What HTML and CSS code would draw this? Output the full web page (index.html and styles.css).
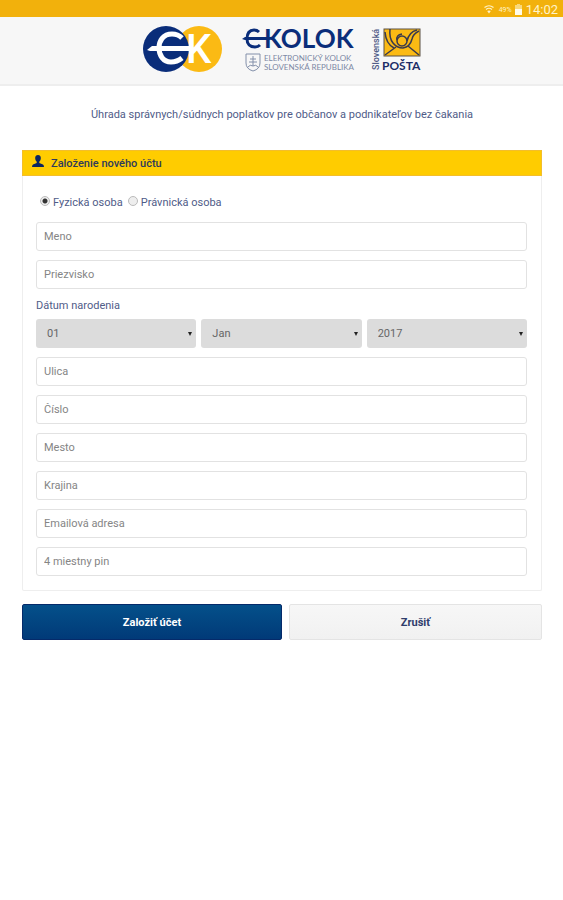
FILE: index.html
```html
<!DOCTYPE html>
<html lang="sk">
<head>
    <meta charset="UTF-8">
    <meta name="viewport" content="width=device-width, initial-scale=1">
    <title>E-KOLOK</title>
    <link rel="stylesheet" href="styles.css">
</head>
<body>
    <div class="status-bar">
        <svg class="status-wifi" width="10" height="9" viewBox="0 0 10 9" fill="none" stroke="#fff3c8">
            <path d="M0.5 2.5Q5 -1 9.5 2.5M2 4.5Q5 2 8 4.5" stroke-width="1.2"/>
            <path d="M3.2 6L5 8.6L6.8 6Q5 4.8 3.2 6Z" fill="#fff3c8" stroke="none"/>
        </svg>
        <span class="status-percent">49%</span>
        <svg class="status-battery" width="7" height="11" viewBox="0 0 7 11">
            <path d="M2 0H5V1H7V5H0V1H2Z" fill="#f9d97c"/>
            <path d="M0 5H7V11H0Z" fill="#fffbe9"/>
        </svg>
        <span class="status-time">14:02</span>
    </div>

    <header class="header">
        <svg class="logo" width="80" height="48" viewBox="0 0 80 48">
            <circle cx="57" cy="24" r="23" fill="#fbba14"/>
            <circle cx="24" cy="24" r="23" fill="#0a2d7a"/>
            <path d="M5 25L10 21H51V26H8Z" fill="#fff"/>
            <path d="M40 13Q36 9 30 9C21 9 17 16 17 23S21 37 29 37Q35 37 40 33" fill="none" stroke="#fff" stroke-width="5"/>
            <text class="logo-k" x="44" y="38">K</text>
        </svg>
        <svg class="logo" width="116" height="52" viewBox="-2 -4 116 52">
            <path d="M18 7Q16 5 13 5C8 5 6 9 6 14S9 22 14 22Q17 22 19 20" fill="none" stroke="#0a2d7a" stroke-width="3"/>
            <path d="M1 14L4 12H26V15H4Z" fill="#0a2d7a"/>
            <text class="logo-title" x="23" y="23">KOLOK</text>
            <g fill="none" stroke="#8390aa">
                <path d="M5 29H19V38Q19 44 12 46Q5 44 5 38Z"/>
                <path d="M12 31V41M9 34H15M8 37H16M7 42Q9 39 12 41Q15 39 17 42"/>
            </g>
            <text class="logo-sub" x="23" y="36">ELEKTRONICKÝ KOLOK</text>
            <text class="logo-sub" x="23" y="45">SLOVENSKÁ REPUBLIKA</text>
        </svg>
        <svg class="logo" width="50" height="48" viewBox="0 0 50 48">
            <text class="logo-side" transform="translate(7 45) rotate(-90)">Slovenská</text>
            <rect x="12" y="4" width="36" height="27" fill="#fbba14" stroke="#5b5145" stroke-width="1"/>
            <g fill="none" stroke="#3a3a4c" stroke-width="1.5">
                <circle cx="30" cy="16" r="5"/>
                <path d="M18 4Q17 13 21 18T31 23Q38 22 40 14Q41 9 47 6"/>
                <path d="M13 7Q14 19 22 23M35 16Q37 7 45 5M25 15Q24 10 30 9"/>
                <path d="M13 30L24 22M47 30L36 21"/>
            </g>
            <text class="logo-post" x="10" y="45">POŠTA</text>
        </svg>
    </header>

    <main class="content">
        <p class="intro">Úhrada správnych/súdnych poplatkov pre občanov a podnikateľov bez čakania</p>

        <form>
            <section class="panel">
                <h1 class="panel-heading">
                    <svg class="panel-icon" width="12" height="12" viewBox="0 0 12 12" fill="#0b2560">
                        <path d="M6 0C8 0 9 1.4 8.8 3.5C8.7 5 8 6 7.3 6.7V8L11 9.4Q12 10 12 12H0Q0 10 1 9.4L4.7 8V6.7C4 6 3.3 5 3.2 3.5C3 1.4 4 0 6 0Z"/>
                    </svg>
                    Založenie nového účtu
                </h1>
                <div class="panel-body">
                    <div class="radios">
                        <input type="radio" id="person" name="type" checked>
                        <label for="person">Fyzická osoba</label>
                        <input type="radio" id="company" name="type">
                        <label for="company">Právnická osoba</label>
                    </div>
                    <input class="field" type="text" placeholder="Meno" aria-label="Meno">
                    <input class="field" type="text" placeholder="Priezvisko" aria-label="Priezvisko">
                    <label class="date-label" for="day">Dátum narodenia</label>
                    <div class="date">
                        <div class="select">
                            <select id="day"><option>01</option></select>
                        </div>
                        <div class="select">
                            <select id="month" aria-label="Mesiac"><option>Jan</option></select>
                        </div>
                        <div class="select">
                            <select id="year" aria-label="Rok"><option>2017</option></select>
                        </div>
                    </div>
                    <input class="field" type="text" placeholder="Ulica" aria-label="Ulica">
                    <input class="field" type="text" placeholder="Číslo" aria-label="Číslo">
                    <input class="field" type="text" placeholder="Mesto" aria-label="Mesto">
                    <input class="field" type="text" placeholder="Krajina" aria-label="Krajina">
                    <input class="field" type="email" placeholder="Emailová adresa" aria-label="Emailová adresa">
                    <input class="field" type="text" placeholder="4 miestny pin" aria-label="4 miestny pin">
                </div>
            </section>

            <div class="buttons">
                <button class="btn btn-primary" type="submit">Založiť účet</button>
                <button class="btn btn-default" type="button">Zrušiť</button>
            </div>
        </form>
    </main>
</body>
</html>
```
FILE: styles.css
```css
* {
    box-sizing: border-box;
}
body {
    margin: 0;
    background: #fff;
    color: #505c88;
    font-family: Roboto, "Noto Sans", sans-serif;
    font-size: 11px;
}
.status-bar {
    display: flex;
    align-items: center;
    justify-content: flex-end;
    gap: 3px;
    height: 17px;
    padding: 2px 5px 0 0;
    background: #f2b10c;
    color: #fff3c8;
}
.status-percent {
    margin-left: 2px;
    font-size: 7px;
}
.status-time {
    margin-left: 1px;
    font-size: 13px;
}
.header {
    display: flex;
    align-items: flex-end;
    justify-content: center;
    gap: 17px;
    padding: 4px 0 11px;
    background: #f7f7f7;
    border-bottom: 2px solid #eee;
}
.logo {
    display: block;
    overflow: visible;
}
.logo-k {
    fill: #fff;
    font: 500 40px Roboto, sans-serif;
}
.logo-title {
    fill: #0a2d7a;
    font: bold 26px/1 Lato, sans-serif;
}
.logo-sub {
    fill: #7d89a5;
    font: 8px Lato, sans-serif;
}
.logo-side {
    fill: #4d5985;
    font: 500 9px Roboto, sans-serif;
}
.logo-post {
    fill: #1c2d66;
    font: bold 12px Lato, sans-serif;
}
.content {
    padding: 0 21px 0 22px;
}
.intro {
    margin: 0;
    padding: 21px 0 27px;
    line-height: 16px;
    text-align: center;
}
.panel {
    border: 1px solid #eee;
    border-top: 0;
    border-radius: 2px;
}
.panel-heading {
    display: flex;
    align-items: center;
    gap: 7px;
    height: 26px;
    margin: 0 -1px;
    padding: 0 9px;
    background: #fc0;
    border: 1px solid #f3be2c;
    color: #2e3a5c;
    font-size: 11px;
    font-weight: 500;
}
.panel-icon {
    margin-bottom: 4px;
}
.panel-body {
    display: flex;
    flex-direction: column;
    gap: 9px;
    padding: 16px 14px 14px 13px;
}
.radios {
    display: flex;
    align-items: center;
    height: 20px;
    margin-bottom: 1px;
    padding-left: 4px;
}
.radios input {
    appearance: none;
    width: 10px;
    height: 10px;
    margin: 0 3px 3px 0;
    border: 1px solid #bbb;
    border-radius: 50%;
    background: #eee;
}
.radios input:checked {
    background: radial-gradient(circle, #333 2px, #eee 3px);
}
.radios label {
    margin-right: 5px;
}
.field {
    width: 100%;
    height: 29px;
    padding: 0 7px;
    border: 1px solid #e2e2e2;
    border-radius: 3px;
    background: #fff;
    color: #555;
    font: inherit;
}
.field::placeholder {
    color: #858585;
    opacity: 1;
}
.date-label {
    margin-bottom: -4px;
    line-height: 16px;
}
.date {
    display: flex;
    gap: 5px;
}
.select {
    position: relative;
    flex: 1;
}
.select::after {
    content: "";
    position: absolute;
    top: 13px;
    right: 4px;
    border: 2px solid transparent;
    border-top: 4px solid #222;
    border-bottom: 0;
    pointer-events: none;
}
.select select {
    display: block;
    appearance: none;
    width: 100%;
    height: 29px;
    padding: 0 11px;
    border: 0;
    border-radius: 3px;
    background: #dcdcdc;
    color: #666;
    font: inherit;
}
.buttons {
    display: flex;
    gap: 7px;
    margin-top: 13px;
}
.btn {
    height: 36px;
    border-radius: 2px;
    font: bold 11px Roboto, sans-serif;
}
.btn-primary {
    width: 50%;
    border: 1px solid #052a6a;
    background: linear-gradient(#04508a, #013a78);
    color: #fff;
}
.btn-default {
    flex: 1;
    border: 1px solid #e4e4e4;
    background: linear-gradient(#f7f7f7, #f1f1f1);
    color: #2f3d6c;
}
```
